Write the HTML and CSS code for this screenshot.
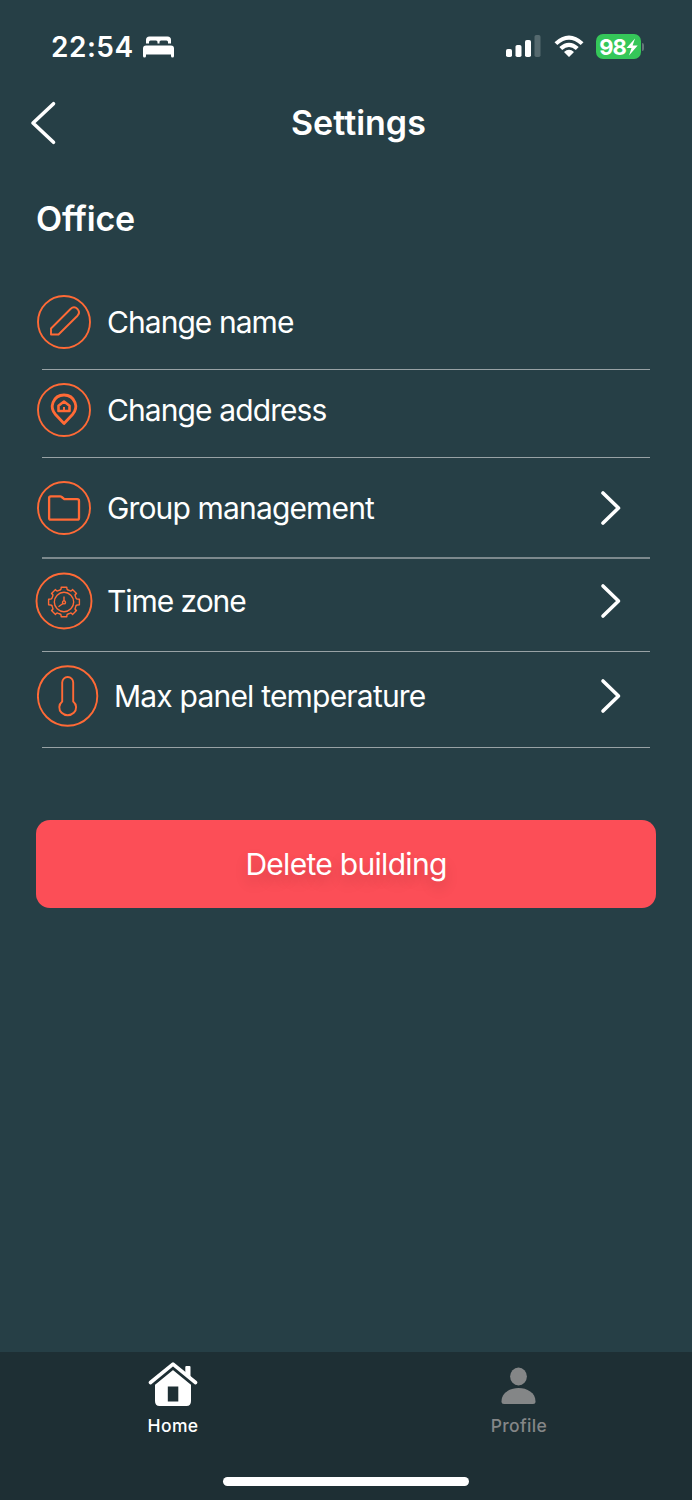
FILE: index.html
```html
<!DOCTYPE html>
<html lang="en">
<head>
<meta charset="utf-8">
<title>Settings</title>
<link rel="stylesheet" href="styles.css">
</head>
<body>
<div class="screen">
  <div class="status">
    <div class="status-left">
      <span class="time">22:54</span>
      <svg class="bed" width="31" height="22" viewBox="0 0 31 22"><path fill="#fff" d="M3 7.500V4Q3 0.500 6.500 0.500H24.500Q28 0.500 28 4V7.500H25V6Q25 4.500 23.500 4.500H18Q16.500 4.500 16.500 6V7.500H14.500V6Q14.500 4.500 13 4.500H7.500Q6 4.500 6 6V7.500ZM0 20V12.500Q0 9.500 3 9.500H28Q31 9.500 31 12.500V20Q31 21.500 29.500 21.500T28 20V18.500H3V20Q3 21.500 1.500 21.500T0 20Z"/></svg>
    </div>
    <div class="status-right">
      <svg width="35" height="23" viewBox="0 0 35 23" fill="#fff"><rect y="14" width="6" height="8" rx="1.800"/><rect x="9.500" y="10" width="6" height="12" rx="1.800"/><rect x="19" y="5" width="6" height="17" rx="1.800"/><rect x="28.500" y="0" width="6" height="22" rx="1.800" opacity=".22"/></svg>
      <svg class="wifi" width="30" height="23" viewBox="0 0 30 23" fill="#fff"><path d="M.500 7.200Q15-6.200 29.500 7.200L26.700 10Q15-.500 3.300 10ZM5.300 12.100Q15 3.300 24.700 12.100L21.800 15Q15 9 8.200 15ZM10 16.900Q15 12.700 20 16.900L15 22Z"/></svg>
      <div class="battery"><span>98</span><svg width="12" height="18" viewBox="0 0 12 18"><path fill="#fff" d="M9 0.500L0.500 10H5.500L3 17.500L11.700 7.500H6.600Z"/></svg></div>
      <i class="battery-tip"></i>
    </div>
  </div>
  <header class="header">
    <svg class="back" width="28" height="44" viewBox="0 0 28 44"><path fill="none" stroke="#fff" stroke-width="3.600" stroke-linecap="round" stroke-linejoin="round" d="M24.500 2.700L4 22L24.500 41.300"/></svg>
    <h1 class="title">Settings</h1>
  </header>
  <h2 class="building">Office</h2>
  <main class="list">
    <div class="row name">
      <svg class="icon" width="56" height="56" viewBox="-28 -28 56 56"><circle r="26"/><path d="M-13 12.500V6.500L6.500-13Q10-16.300 13.500-13Q16.500-9.500 13.500-6.300L-5.500 12.500Z" stroke-width="1.900"/></svg>
      <span class="label l-name">Change name</span>
    </div>
    <div class="row address">
      <svg class="icon" width="56" height="56" viewBox="-28 -28 56 56"><circle r="26"/><path stroke-width="2.800" d="M0 13.500L-8.500 4.500C-12 .500-12.500-3.500-11-7.500C-7-17.500 7-17.500 11-7.500C12.500-3.500 12 .500 8.500 4.500Z"/><path stroke-width="2.600" d="M-5.500 1V-4.300L0-8.500L5.500-4.300V1Z"/><path stroke-width="2" d="M0 1V-3"/></svg>
      <span class="label l-address">Change address</span>
    </div>
    <div class="row group">
      <svg class="icon" width="56" height="56" viewBox="-28 -28 56 56"><circle r="26"/><path stroke-width="2.300" d="M-14.900 10V-10Q-14.900-11.700-13.200-11.700H-4Q-3-11.700-2.300-11L.300-8.800H13.300Q15-8.800 15-7.100V10Q15 11.700 13.300 11.700H-13.200Q-14.900 11.700-14.900 10Z"/></svg>
      <span class="label l-group">Group management</span>
      <svg class="chevron" width="24" height="38" viewBox="0 0 24 38"><path d="M4 4L19.500 19L4 34"/></svg>
    </div>
    <div class="row zone">
      <svg class="icon" width="58" height="58" viewBox="-29 -29 58 58"><circle r="27.500"/><g stroke-width="1.400" transform="translate(0 1)"><path d="M-4-12Q-2.800-12-2.800-14.700H2.800Q2.800-12 4-12L5.700-11.300Q7.500-10.500 8.500-12.500L12.500-8.500Q10.500-7.500 11.300-5.700L12-4Q12-2.800 15.400-2.800V2.800Q12 2.800 12 4L11.300 5.700Q10.500 7.500 12.500 8.500L8.500 12.500Q7.500 10.500 5.700 11.300L4 12Q2.800 12 2.800 14.700H-2.800Q-2.800 12-4 12L-5.700 11.300Q-7.500 10.500-8.500 12.500L-12.500 8.500Q-10.500 7.500-11.300 5.700L-12 4Q-12 2.800-15.400 2.800V-2.800Q-12-2.800-12-4L-11.300-5.700Q-10.500-7.500-12.500-8.500L-8.500-12.500Q-7.500-10.500-5.700-11.300Z"/><circle r="9.700"/><circle r="1.500" cy=".4"/><path d="M0-5.500V-1M-1 1.500L-5.500 4.700"/></g></svg>
      <span class="label l-zone">Time zone</span>
      <svg class="chevron" width="24" height="38" viewBox="0 0 24 38"><path d="M4 4L19.500 19L4 34"/></svg>
    </div>
    <div class="row temp">
      <svg class="icon" width="62" height="62" viewBox="-31 -31 62 62"><circle cx="-.4" r="29.700"/><path stroke-width="1.900" d="M-5.800 5.500V-13.500A5.500 5.500 0 0 1 5.200-13.500V5.500A8.400 7.800 0 1 1-5.800 5.500Z"/></svg>
      <span class="label l-temp">Max panel temperature</span>
      <svg class="chevron" width="24" height="38" viewBox="0 0 24 38"><path d="M4 4L19.500 19L4 34"/></svg>
    </div>
  </main>
  <button class="delete">Delete building</button>
  <nav class="tabs">
    <div class="tab">
      <svg width="50" height="46" viewBox="0 0 50 46" fill="#fff"><path d="M7 23L25 8L43 23V40Q43 45 38.500 45H11.500Q7 45 7 40Z"/><path d="M3 22L25 4L47 22" fill="none" stroke="#1e2f34" stroke-width="8"/><path d="M2.500 21.500L25 3.200L47.500 21.500" fill="none" stroke="#fff" stroke-width="3.600" stroke-linejoin="round" stroke-linecap="round"/><path d="M37.300 6Q37.300 5 38.300 5H41.500Q42.500 5 42.500 6V18L37.300 13.500Z"/><rect x="19.800" y="25.500" width="10.500" height="15" fill="#1e2f34"/></svg>
      <span class="tab-label">Home</span>
    </div>
    <div class="tab inactive">
      <svg width="50" height="46" viewBox="0 0 50 46" fill="#848687"><ellipse cx="24.500" cy="15.500" rx="8.400" ry="9"/><path d="M7.500 40.500C7.500 22.500 41.500 22.500 41.500 40.500Q41.500 43 39 43H10Q7.500 43 7.500 40.500Z"/></svg>
      <span class="tab-label">Profile</span>
    </div>
    <div class="home-bar"></div>
  </nav>
</div>
</body>
</html>
```
FILE: styles.css
```css
* { box-sizing: border-box; }
body { margin: 0; background: #263f46; color: #fff; font-family: Inter, "Liberation Sans", sans-serif; }
.screen { width: 692px; height: 1500px; display: flex; flex-direction: column; }
.status { height: 92px; display: flex; justify-content: space-between; padding: 0 47px 0 51px; }
.status-left, .status-right { height: 93px; display: flex; align-items: center; }
.status-left { gap: 9px; }
.time { font-size: 28px; font-weight: 600; letter-spacing: 0.5px; }
.wifi { margin-left: 13px; }
.battery { margin-left: 12px; width: 45px; height: 25px; border-radius: 7px; background: #35c759; display: flex; align-items: center; justify-content: center; font-size: 22px; font-weight: 700; letter-spacing: -1px; }
.battery-tip { width: 2px; height: 8px; margin: 0 1px; border-radius: 0 2px 2px 0; background: #657579; }
.header { height: 62px; display: flex; align-items: center; padding-left: 29px; }
.title { margin: 0 0 0 234px; font-size: 34px; font-weight: 600; line-height: 62px; }
.building { margin: 35px 0 0 36px; height: 60px; line-height: 60px; font-size: 34px; font-weight: 600; letter-spacing: -0.2px; }
.list { margin: 25px 42px 0; display: flex; flex-direction: column; }
.row { display: flex; align-items: center; border-bottom: 1px solid #98a2a5; }
.name { height: 96px; }
.address { height: 88px; padding-bottom: 7px; }
.group { height: 101px; padding-top: 1px; border-bottom: 2px solid #7c898d; }
.zone { height: 93px; padding-bottom: 8px; }
.temp { height: 96px; padding-bottom: 7px; }
.icon { margin-left: -6px; fill: none; stroke: #ff6a36; stroke-width: 1.9px; stroke-linejoin: round; flex: none; }
.zone .icon { margin-left: -7px; }
.temp .icon { margin-left: -5px; }
.label { margin-left: 15px; font-size: 30px; line-height: 38px; white-space: nowrap; }
.l-name { letter-spacing: -0.95px; }
.l-address { letter-spacing: -0.9px; }
.l-group { letter-spacing: -0.85px; }
.l-zone { margin-left: 14px; letter-spacing: -1.05px; }
.l-temp { letter-spacing: -0.8px; }
.chevron { margin-left: auto; margin-right: 27px; fill: none; stroke: #fff; stroke-width: 3.6px; stroke-linecap: round; stroke-linejoin: round; }
.delete { margin: 72px 36px 0; height: 88px; border: 0; border-radius: 14px; background: #fc4e57; color: #fff; font: 30px Inter, "Liberation Sans", sans-serif; letter-spacing: -0.7px; text-shadow: 0 7px 14px rgba(0,0,0,.16); }
.tabs { position: relative; margin-top: auto; height: 148px; background: #1e2f34; display: flex; }
.tab { flex: 1; display: flex; flex-direction: column; align-items: center; padding-top: 9px; }
.tab-label { margin-top: 8px; font-size: 17.5px; font-weight: 500; line-height: 22px; letter-spacing: .35px; }
.inactive { color: #848687; }
.home-bar { position: absolute; left: 223px; bottom: 14px; width: 246px; height: 9px; border-radius: 5px; background: #fff; }
```
